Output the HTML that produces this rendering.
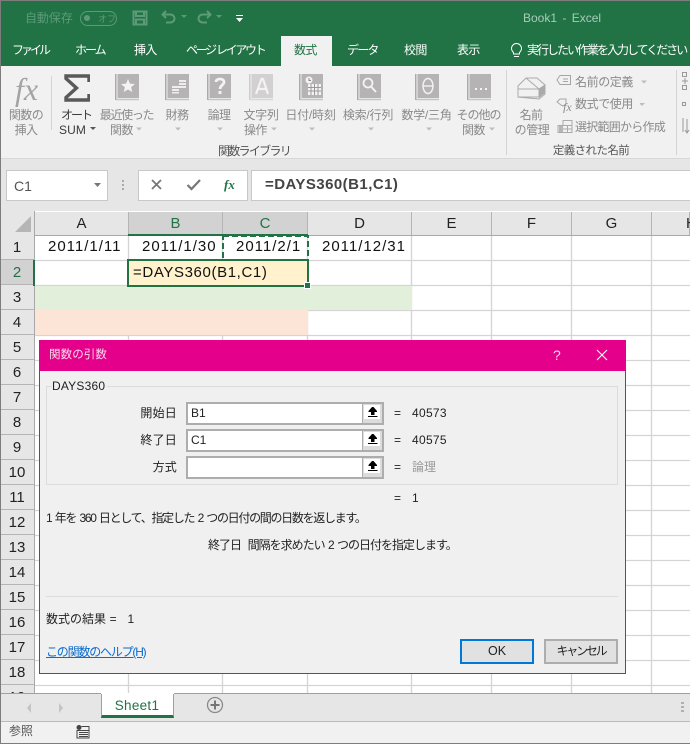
<!DOCTYPE html>
<html lang="ja"><head><meta charset="utf-8"><style>
html,body{margin:0;padding:0}
body{width:690px;height:744px;overflow:hidden;position:relative;background:#fff;font-family:"Liberation Sans","Noto Sans CJK JP",sans-serif;font-size:12px;color:#222}
.a,.t,svg{position:absolute}
.t{white-space:nowrap;line-height:16px}
.c{transform:translateX(-50%)}
.tab{color:#fff;top:42px;letter-spacing:-.6px}
.g{color:#8a8a8a;letter-spacing:-.6px;font-size:12px}
.d{color:#3c3c3c}
.rn{left:0;width:34px;text-align:center;font-size:15px;color:#222;line-height:25px}
.ch{top:212px;text-align:center;font-size:15px;line-height:23px;height:23px;color:#222;background:#e6e6e6;border-right:1px solid #b5b5b5;box-sizing:border-box}
.cell{top:236px;font-size:15px;letter-spacing:1px;line-height:22px;color:#111}
.input{left:186px;width:198px;height:23px;box-sizing:border-box;border:2px solid #adadad;border-right-width:0;background:#fff;font-size:12px;line-height:18px;padding-left:3px}
.btn{left:362px;width:22px;height:23px;box-sizing:border-box;border:2px solid #adadad;border-left:1px solid #adadad;background:#dcdcdc}
.btn i{position:absolute;left:1px;top:1px;width:16px;height:14px;background:#fff}
.eq{left:394px;color:#222}
.lb{right:513px;color:#222;letter-spacing:.2px}
</style></head><body>
<!-- window frame -->
<div class="a" style="left:0;top:0;width:690px;height:744px;background:#fff"></div>
<!-- title bar -->
<div class="a" style="left:0;top:0;width:690px;height:66px;background:#217346"></div>
<div class="a" style="left:0;top:0;width:690px;height:1px;background:#7d7d7d"></div>
<div class="t" style="left:25px;top:10px;color:#5c9a78;letter-spacing:-.1px">自動保存</div>
<div class="a" style="left:80px;top:11px;width:35px;height:13px;border:1px solid #5c9a78;border-radius:8px"></div>
<div class="a" style="left:84px;top:15px;width:6px;height:6px;background:#5c9a78;border-radius:50%"></div>
<div class="t" style="left:98px;top:11px;color:#5c9a78;font-size:9px">オフ</div>
<svg style="left:132px;top:10px" width="16" height="16" viewBox="0 0 16 16"><path d="M1.500 1.500h13v13h-13zM4 1.500v4.500h8v-4.500M4 14.500v-5h8v5" fill="none" stroke="#5c9a78" stroke-width="2"/></svg>
<svg style="left:161px;top:9px" width="64" height="18" viewBox="0 0 64 18"><path d="M5 2L1.500 5.500L5 9M2 5.500h7c6 0 6 8 0 8H5" fill="none" stroke="#5c9a78" stroke-width="2"/><path d="M20 6h6l-3 3z" fill="#5c9a78"/><path d="M46 2L49.500 5.500L46 9M49 5.500h-7c-6 0-6 8 0 8h4" fill="none" stroke="#5c9a78" stroke-width="2"/><path d="M55 6h6l-3 3z" fill="#5c9a78"/></svg>
<svg style="left:235px;top:15px" width="9" height="8" viewBox="0 0 9 8"><path d="M1 0h7v1H1zM1 3h7L4.500 7z" fill="#fff"/></svg>
<div class="t" style="left:523px;top:10px;color:#a8cbb8;font-size:12px;word-spacing:2px">Book1 - Excel</div>
<!-- tabs -->
<div class="a" style="left:281px;top:36px;width:51px;height:30px;background:#f1f1f1"></div>
<div class="t tab" style="left:12px;letter-spacing:-3px">ファイル</div>
<div class="t tab" style="left:75px;letter-spacing:-2px">ホーム</div>
<div class="t tab" style="left:134px">挿入</div>
<div class="t tab" style="left:186px;letter-spacing:-2.300px">ページ レイアウト</div>
<div class="t tab" style="left:294px;color:#217346">数式</div>
<div class="t tab" style="left:347px;letter-spacing:-1.800px">データ</div>
<div class="t tab" style="left:404px">校閲</div>
<div class="t tab" style="left:457px">表示</div>
<svg style="left:510px;top:43px" width="13" height="15" viewBox="0 0 13 15"><path d="M3.500 9.500C2 8 1.500 7 1.500 5.500a5 5 0 0 1 10 0c0 1.500-.5 2.500-2 4v1.500h-6zM4 13.500h5" fill="none" stroke="#fff" stroke-width="1"/></svg>
<div class="t tab" style="left:527px;letter-spacing:-2px">実行したい作業を入力してください</div>
<!-- ribbon -->
<div class="a" style="left:0;top:66px;width:690px;height:93px;background:#f1f1f1"></div>
<div class="a" style="left:0;top:158px;width:690px;height:1px;background:#d8d8d8"></div>
<div class="a" style="left:51px;top:76px;width:1px;height:54px;background:#d4d4d4"></div>
<div class="a" style="left:506px;top:70px;width:1px;height:85px;background:#d4d4d4"></div>
<div class="a" style="left:676px;top:70px;width:1px;height:85px;background:#d4d4d4"></div>
<div class="t" style="left:15px;top:69px;font:italic 32px/40px 'Liberation Serif',serif;color:#a3a3a3">fx</div>
<div class="t g c" style="left:26px;top:107px">関数の</div>
<div class="t g c" style="left:26px;top:122px">挿入</div>
<svg style="left:64px;top:74px" width="26" height="28" viewBox="0 0 26 28"><path d="M25 8V2H2v2.500L12.500 14 2 23.500V26h23v-6" fill="none" stroke="#595959" stroke-width="3.400"/></svg>
<div class="t d c" style="left:76px;top:107px;letter-spacing:-2px">オート</div>
<div class="t d" style="left:59px;top:122px;letter-spacing:.1px">SUM</div>
<svg style="left:90px;top:127px" width="7" height="4"><path d="M0 0h6L3 3z" fill="#555"/></svg>
<svg style="left:115px;top:74px" width="24" height="28" viewBox="0 0 24 28"><rect x="0" y="0" width="1.500" height="26" fill="#aaa"/><rect x="2.500" y="0" width="21.500" height="24" fill="#b5b3b3"/><path d="M1 25.500h23" stroke="#c4c4c4" stroke-width="1.500"/><path d="M13 5l1.900 4.600 5 .4-3.800 3.200 1.200 4.900L13 15.500 8.700 18l1.200-4.800L6 10l5.100-.4z" fill="#f3f3f3"/></svg>
<svg style="left:165px;top:74px" width="24" height="28" viewBox="0 0 24 28"><rect x="0" y="0" width="1.500" height="26" fill="#aaa"/><rect x="2.500" y="0" width="21.500" height="24" fill="#b5b3b3"/><path d="M1 25.500h23" stroke="#c4c4c4" stroke-width="1.500"/><path d="M7 12h7v2H7zM7 15h7v2H7zM7 18h7v1.500H7zM14 6h7v2h-7zM14 9h7v2h-7zM14 12h7v2h-7z" fill="#eee"/></svg>
<svg style="left:207px;top:74px" width="24" height="28" viewBox="0 0 24 28"><rect x="0" y="0" width="1.500" height="26" fill="#aaa"/><rect x="2.500" y="0" width="21.500" height="24" fill="#b5b3b3"/><path d="M1 25.500h23" stroke="#c4c4c4" stroke-width="1.500"/><path d="M9 8c0-4 8-4 8 0 0 3-4 3.500-4 7" fill="none" stroke="#f3f3f3" stroke-width="2.800"/><rect x="11.500" y="17" width="3" height="3" fill="#f3f3f3"/></svg>
<svg style="left:249px;top:74px" width="24" height="28" viewBox="0 0 24 28"><rect x="0" y="0" width="1.500" height="26" fill="#ccc"/><rect x="2.500" y="0" width="21.500" height="24" fill="#d2d0d0"/><path d="M1 25.500h23" stroke="#d8d8d8" stroke-width="1.500"/><path d="M7 20L12.500 5h1.500L19 20M9 15h8" fill="none" stroke="#f3f3f3" stroke-width="2.200"/></svg>
<svg style="left:299px;top:74px" width="24" height="28" viewBox="0 0 24 28"><rect x="0" y="0" width="1.500" height="26" fill="#aaa"/><rect x="2.500" y="0" width="21.500" height="24" fill="#b5b3b3"/><path d="M1 25.500h23" stroke="#c4c4c4" stroke-width="1.500"/><circle cx="10" cy="6" r="3.500" fill="#f3f3f3"/><path d="M10 4v2.500h2" stroke="#888" fill="none"/><rect x="9" y="10" width="13" height="11" fill="#f3f3f3"/><path d="M12 10v11M15.500 10v11M19 10v11M9 13.500h13M9 17h13" stroke="#999" stroke-width="1"/></svg>
<svg style="left:357px;top:74px" width="24" height="28" viewBox="0 0 24 28"><rect x="0" y="0" width="1.500" height="26" fill="#aaa"/><rect x="2.500" y="0" width="21.500" height="24" fill="#b5b3b3"/><path d="M1 25.500h23" stroke="#c4c4c4" stroke-width="1.500"/><circle cx="11" cy="9" r="4.500" fill="none" stroke="#f3f3f3" stroke-width="1.800"/><path d="M14 12.500l5 5.500" stroke="#f3f3f3" stroke-width="2"/></svg>
<svg style="left:415px;top:74px" width="24" height="28" viewBox="0 0 24 28"><rect x="0" y="0" width="1.500" height="26" fill="#aaa"/><rect x="2.500" y="0" width="21.500" height="24" fill="#b5b3b3"/><path d="M1 25.500h23" stroke="#c4c4c4" stroke-width="1.500"/><ellipse cx="13" cy="12" rx="5" ry="7.500" fill="none" stroke="#f3f3f3" stroke-width="1.400"/><path d="M8 12h10" stroke="#f3f3f3" stroke-width="1.400"/></svg>
<svg style="left:467px;top:74px" width="24" height="28" viewBox="0 0 24 28"><rect x="0" y="0" width="1.500" height="26" fill="#aaa"/><rect x="2.500" y="0" width="21.500" height="24" fill="#b5b3b3"/><path d="M1 25.500h23" stroke="#c4c4c4" stroke-width="1.500"/><path d="M8 14h2v2H8zM13 14h2v2h-2zM18 14h2v2h-2z" fill="#f3f3f3"/></svg>
<div class="t g c" style="left:126.500px;top:107px;letter-spacing:-1.300px">最近使った</div>
<div class="t g" style="left:110px;top:122px">関数</div>
<div class="t g c" style="left:177px;top:107px">財務</div>
<div class="t g c" style="left:219px;top:107px">論理</div>
<div class="t g c" style="left:261px;top:107px;letter-spacing:-.3px">文字列</div>
<div class="t g" style="left:244px;top:122px">操作</div>
<div class="t g c" style="left:310.500px;top:107px;letter-spacing:-.2px">日付/時刻</div>
<div class="t g c" style="left:368px;top:107px;letter-spacing:-.2px">検索/行列</div>
<div class="t g c" style="left:426.500px;top:107px;letter-spacing:-.2px">数学/三角</div>
<div class="t g c" style="left:478.500px;top:107px;letter-spacing:-1px">その他の</div>
<div class="t g" style="left:462px;top:122px">関数</div>
<svg style="left:0;top:125px" width="500" height="8"><g fill="#bdbdbd"><path d="M136 2.500h6l-3 3zM175 2.500h6l-3 3zM217 2.500h6l-3 3zM271 2.500h6l-3 3zM309 2.500h6l-3 3zM368 2.500h6l-3 3zM426 2.500h6l-3 3zM489 2.500h6l-3 3z"/></g></svg>
<div class="t c" style="left:254px;top:143px;color:#555;letter-spacing:-1.700px">関数ライブラリ</div>
<div class="t c" style="left:591px;top:143px;color:#555;letter-spacing:-.6px;font-size:11.500px">定義された名前</div>
<svg style="left:517px;top:76px" width="30" height="24" viewBox="0 0 30 24"><path d="M1 21V10L9 2h11l8 7v9l-6 5zM1 13h21v8H1zM9 2l13 11M22 13l6-4" fill="#f1f1f1" stroke="#aaa"/><path d="M22 13v9l6-5V9z" fill="#aaa"/></svg>
<div class="t g c" style="left:531px;top:107px">名前</div>
<div class="t g c" style="left:532px;top:122px;letter-spacing:-.4px">の管理</div>
<svg style="left:556px;top:74px" width="16" height="13" viewBox="0 0 16 13"><path d="M4 1.500h10.500v9H4L1 6z" fill="none" stroke="#a5a5a5"/><path d="M7 5h5M7 7.500h5" stroke="#a5a5a5"/></svg>
<svg style="left:556px;top:97px" width="17" height="16" viewBox="0 0 17 16"><path d="M1 5l3-3h6v5l-3 2-2-1z" fill="none" stroke="#a5a5a5"/><text x="7" y="14" font-family="Liberation Serif" font-style="italic" font-size="12" fill="#8a8a8a">fx</text></svg>
<svg style="left:557px;top:119px" width="16" height="15" viewBox="0 0 16 15"><path d="M6 1.500h9v12H1v-7h5z" fill="#f1f1f1" stroke="#aaa"/><rect x="2" y="7" width="4" height="6" fill="#b5b5b5"/><path d="M6 6.500h9M6 10h9M10.500 6.500v7" stroke="#aaa"/></svg>
<div class="t g" style="left:575px;top:74px;letter-spacing:-.4px">名前の定義</div>
<div class="t g" style="left:575px;top:96px;letter-spacing:-.4px">数式で使用</div>
<div class="t g" style="left:575px;top:119px;letter-spacing:-.75px">選択範囲から作成</div>
<svg style="left:640px;top:78px" width="9" height="30"><path d="M1 2.500h6l-3 3zM-1 25h6l-3 3z" fill="#bdbdbd"/></svg>
<svg style="left:682px;top:72px" width="8" height="64" viewBox="0 0 8 64"><g fill="none" stroke="#999"><rect x=".5" y=".5" width="4" height="4"/><rect x=".5" y="13.500" width="4" height="4"/><path d="M3 6v6M0 9h6"/><rect x=".5" y="30.500" width="3" height="3"/><path d="M1 46v14M5 47v14M3 58l2 3 2-3"/></g></svg>
<!-- formula bar -->
<div class="a" style="left:0;top:159px;width:690px;height:52px;background:#e6e6e6"></div>
<div class="a" style="left:6px;top:170px;width:102px;height:31px;box-sizing:border-box;background:#fff;border:1px solid #c8c8c8"></div>
<div class="t" style="left:14px;top:178px;font-size:14px;color:#555">C1</div>
<svg style="left:94px;top:183px" width="8" height="5"><path d="M0 0h7L3.500 4z" fill="#777"/></svg>
<div class="a" style="left:122px;top:180px;width:2px;height:2px;background:#aaa;box-shadow:0 4px 0 #aaa,0 8px 0 #aaa"></div>
<div class="a" style="left:138px;top:170px;width:110px;height:31px;box-sizing:border-box;background:#fff;border:1px solid #c8c8c8"></div>
<svg style="left:150px;top:178px" width="13" height="13"><path d="M2 2l9 9M11 2l-9 9" stroke="#777" stroke-width="1.800" fill="none"/></svg>
<svg style="left:186px;top:178px" width="16" height="13"><path d="M1.500 7l4 4L14 2" stroke="#777" stroke-width="2.200" fill="none"/></svg>
<div class="t" style="left:224px;top:177px;font:italic bold 13px/16px 'Liberation Serif',serif;color:#217346">fx</div>
<div class="a" style="left:251px;top:170px;width:439px;height:31px;box-sizing:border-box;background:#fff;border:1px solid #c8c8c8;border-right:0"></div>
<div class="t" style="left:265px;top:177px;font-size:15px;font-weight:bold;color:#444;letter-spacing:.45px">=DAYS360(B1,C1)</div>
<!-- grid -->
<svg style="left:0;top:211px" width="690" height="483"><g stroke="#d4d4d4" stroke-width="1.300" fill="none"><path d="M128.500 24v459M222.500 24v459M307.500 24v459M411.500 24v459M491.500 24v459M571.500 24v459M651.500 24v459"/><path d="M35 49.500h655M35 74.500h655M35 99.500h655M35 124.500h655M35 149.500h655M35 174.500h655M35 199.500h655M35 224.500h655M35 249.500h655M35 274.500h655M35 299.500h655M35 324.500h655M35 349.500h655M35 374.500h655M35 399.500h655M35 424.500h655M35 449.500h655M35 474.500h655"/></g></svg>
<div class="a" style="left:35px;top:286px;width:377px;height:24px;background:#e2efda"></div>
<div class="a" style="left:35px;top:310px;width:273px;height:25px;background:#fce4d6"></div>
<!-- headers -->
<div class="a" style="left:0;top:211px;width:35px;height:24px;background:#e6e6e6"></div>
<svg style="left:14px;top:215px" width="18" height="18"><path d="M17 1v16H1z" fill="#b5b5b5"/></svg>
<div class="a" style="left:0;top:235px;width:34px;height:458px;background:#e6e6e6;overflow:hidden">
<div class="t rn" style="top:0">1</div><div class="a" style="left:0;top:25px;width:34px;height:25px;background:#d2d2d2"></div><div class="t rn" style="top:25px;color:#217346">2</div><div class="t rn" style="top:50px">3</div><div class="t rn" style="top:75px">4</div><div class="t rn" style="top:100px">5</div><div class="t rn" style="top:125px">6</div><div class="t rn" style="top:150px">7</div><div class="t rn" style="top:175px">8</div><div class="t rn" style="top:200px">9</div><div class="t rn" style="top:225px">10</div><div class="t rn" style="top:250px">11</div><div class="t rn" style="top:275px">12</div><div class="t rn" style="top:300px">13</div><div class="t rn" style="top:325px">14</div><div class="t rn" style="top:350px">15</div><div class="t rn" style="top:375px">16</div><div class="t rn" style="top:400px">17</div><div class="t rn" style="top:425px">18</div><div class="t rn" style="top:450px">19</div>
<svg style="left:0;top:0" width="34" height="458"><path d="M0 24.500h34M0 49.500h34M0 74.500h34M0 99.500h34M0 124.500h34M0 149.500h34M0 174.500h34M0 199.500h34M0 224.500h34M0 249.500h34M0 274.500h34M0 299.500h34M0 324.500h34M0 349.500h34M0 374.500h34M0 399.500h34M0 424.500h34M0 449.500h34" stroke="#b5b5b5"/></svg>
</div>
<div class="a" style="left:34px;top:211px;width:1px;height:482px;background:#a8a8a8"></div>
<div class="a ch" style="left:35px;width:94px">A</div>
<div class="a ch" style="left:129px;width:94px;background:#d2d2d2;color:#217346">B</div>
<div class="a ch" style="left:223px;width:85px;background:#d2d2d2;color:#217346">C</div>
<div class="a ch" style="left:308px;width:104px">D</div>
<div class="a ch" style="left:412px;width:80px">E</div>
<div class="a ch" style="left:492px;width:80px">F</div>
<div class="a ch" style="left:572px;width:80px">G</div>
<div class="a ch" style="left:652px;width:38px;text-align:left;padding-left:34px">H</div>
<div class="a" style="left:35px;top:235px;width:655px;height:1px;background:#a8a8a8"></div>
<div class="a" style="left:128px;top:234px;width:180px;height:2px;background:#217346"></div>
<div class="a" style="left:33px;top:260px;width:2px;height:26px;background:#217346"></div>
<!-- cells -->
<div class="t cell" style="left:48px">2011/1/11</div>
<div class="t cell" style="left:142px">2011/1/30</div>
<div class="t cell" style="left:236px">2011/2/1</div>
<div class="t cell" style="left:322px">2011/12/31</div>
<svg style="left:221px;top:234px" width="90" height="28"><rect x="2" y="2" width="85" height="25" fill="none" stroke="#217346" stroke-width="2" stroke-dasharray="6 3"/></svg>
<div class="a" style="left:127px;top:259px;width:182px;height:28px;box-sizing:border-box;border:2px solid #217346;background:#fff2cc"></div>
<div class="a" style="left:305px;top:283px;width:5px;height:5px;background:#217346;border:1px solid #fff;box-sizing:content-box;margin:-1px 0 0 -1px"></div>
<div class="t" style="left:133px;top:262px;font-size:15px;letter-spacing:.62px;line-height:22px;color:#111">=DAYS360(B1,C1)</div>
<!-- dialog -->
<div class="a" style="left:39px;top:340px;width:587px;height:334px;box-sizing:border-box;background:#f0f0f0;border:1px solid #e6008c"></div>
<div class="a" style="left:39px;top:340px;width:587px;height:31px;background:#e4008a"></div>
<div class="t" style="left:49px;top:347px;color:#fbd9ec;letter-spacing:.1px;font-size:11.500px">関数の引数</div>
<div class="t" style="left:553px;top:347px;color:#fbd9ec;font-size:14px">?</div>
<svg style="left:596px;top:349px" width="12" height="12"><path d="M1 1l10 10M11 1L1 11" stroke="#fff" stroke-width="1.100"/></svg>
<div class="a" style="left:46px;top:386px;width:572px;height:99px;box-sizing:border-box;border:1px solid #dcdcdc"></div>
<div class="t" style="left:52px;top:379px;padding-right:2px;background:#f0f0f0;line-height:14px;font-size:12px;letter-spacing:.2px">DAYS360</div>
<div class="t lb" style="top:405px;right:513px">開始日</div>
<div class="t lb" style="top:432px">終了日</div>
<div class="t lb" style="top:459px">方式</div>
<div class="a input" style="top:402px">B1</div><div class="a btn" style="top:402px"><i></i></div>
<div class="a input" style="top:429px">C1</div><div class="a btn" style="top:429px"><i></i></div>
<div class="a input" style="top:456px"></div><div class="a btn" style="top:456px"><i></i></div>
<svg style="left:366px;top:406px" width="14" height="68" viewBox="0 0 14 68"><g fill="#000"><path d="M6 1h1.500L11 5v1H8.500v3H5V6H2.500V5zM2 10h9.500v1H2zM6 28h1.500L11 32v1H8.500v3H5v-3H2.500v-1zM2 37h9.500v1H2zM6 55h1.500L11 59v1H8.500v3H5v-3H2.500v-1zM2 64h9.500v1H2z"/></g></svg>
<div class="t eq" style="top:405px">=</div><div class="t" style="left:412px;top:405px;letter-spacing:.3px">40573</div>
<div class="t eq" style="top:432px">=</div><div class="t" style="left:412px;top:432px;letter-spacing:.3px">40575</div>
<div class="t eq" style="top:459px">=</div><div class="t" style="left:412px;top:459px;color:#999">論理</div>
<div class="t eq" style="top:490px">=</div><div class="t" style="left:412px;top:490px">1</div>
<div class="t" style="left:46px;top:510px;letter-spacing:-1.300px;word-spacing:1.300px">1 年を 360 日として、指定した 2 つの日付の間の日数を返します。</div>
<div class="t" style="left:208px;top:537px;letter-spacing:-1px;word-spacing:1px">終了日&nbsp; 間隔を求めたい 2 つの日付を指定します。</div>
<div class="a" style="left:46px;top:596px;width:572px;height:1px;background:#dcdcdc"></div>
<div class="t" style="left:46px;top:611px;white-space:pre;word-spacing:.3px">数式の結果 =   1</div>
<div class="t" style="left:46px;top:644px;color:#0a6bd0;text-decoration:underline;letter-spacing:-1.200px">この関数のヘルプ(H)</div>
<div class="a" style="left:460px;top:639px;width:74px;height:25px;box-sizing:border-box;border:2px solid #0078d7;background:#e1e1e1;text-align:center;line-height:21px;font-size:12.500px">OK</div>
<div class="a" style="left:544px;top:639px;width:74px;height:25px;box-sizing:border-box;border:2px solid #adadad;background:#e1e1e1;text-align:center;line-height:21px;letter-spacing:-2.200px">キャンセル</div>
<!-- sheet tabs -->
<div class="a" style="left:0;top:693px;width:690px;height:29px;box-sizing:border-box;background:#e6e6e6;border-top:1px solid #a0a0a0;border-bottom:1px solid #bbb"></div>
<svg style="left:27px;top:703px" width="36" height="11"><path d="M4 0v10L0 5zM32 0v10l4-5z" fill="#c4c4c4"/></svg>
<div class="a" style="left:101px;top:693px;width:73px;height:25px;box-sizing:border-box;background:#fff;border:1px solid #a0a0a0;border-top:0;border-bottom:3px solid #217346"></div>
<div class="a" style="left:101px;top:693px;width:73px;height:1px;background:#fff"></div>
<div class="t c" style="left:137px;top:698px;color:#217346;font-size:13.500px;letter-spacing:.3px">Sheet1</div>
<svg style="left:206px;top:696px" width="18" height="18"><circle cx="9" cy="9" r="7.500" fill="none" stroke="#8a8a8a" stroke-width="1.300"/><path d="M9 4.500v9M4.500 9h9" stroke="#777" stroke-width="2"/></svg>
<div class="a" style="left:681px;top:702px;width:3px;height:2px;background:#b0b0b0;box-shadow:0 4px 0 #b0b0b0,0 8px 0 #b0b0b0"></div>
<!-- status -->
<div class="a" style="left:0;top:722px;width:690px;height:22px;background:#f1f1f1"></div>
<div class="a" style="left:0;top:743px;width:690px;height:1px;background:#7d7d7d"></div>
<div class="t" style="left:9px;top:723px;color:#555;letter-spacing:-.1px">参照</div>
<svg style="left:76px;top:725px" width="14" height="14" viewBox="0 0 14 14"><circle cx="3" cy="2.500" r="2.500" fill="#444"/><path d="M5.500 1.500H13V13H1V5.500h12M3 7.500h9M3 9.500h9M3 11.500h9" fill="none" stroke="#444"/></svg>
<div class="a" style="left:0;top:0;width:1px;height:744px;background:#7d7d7d"></div>
</body></html>
